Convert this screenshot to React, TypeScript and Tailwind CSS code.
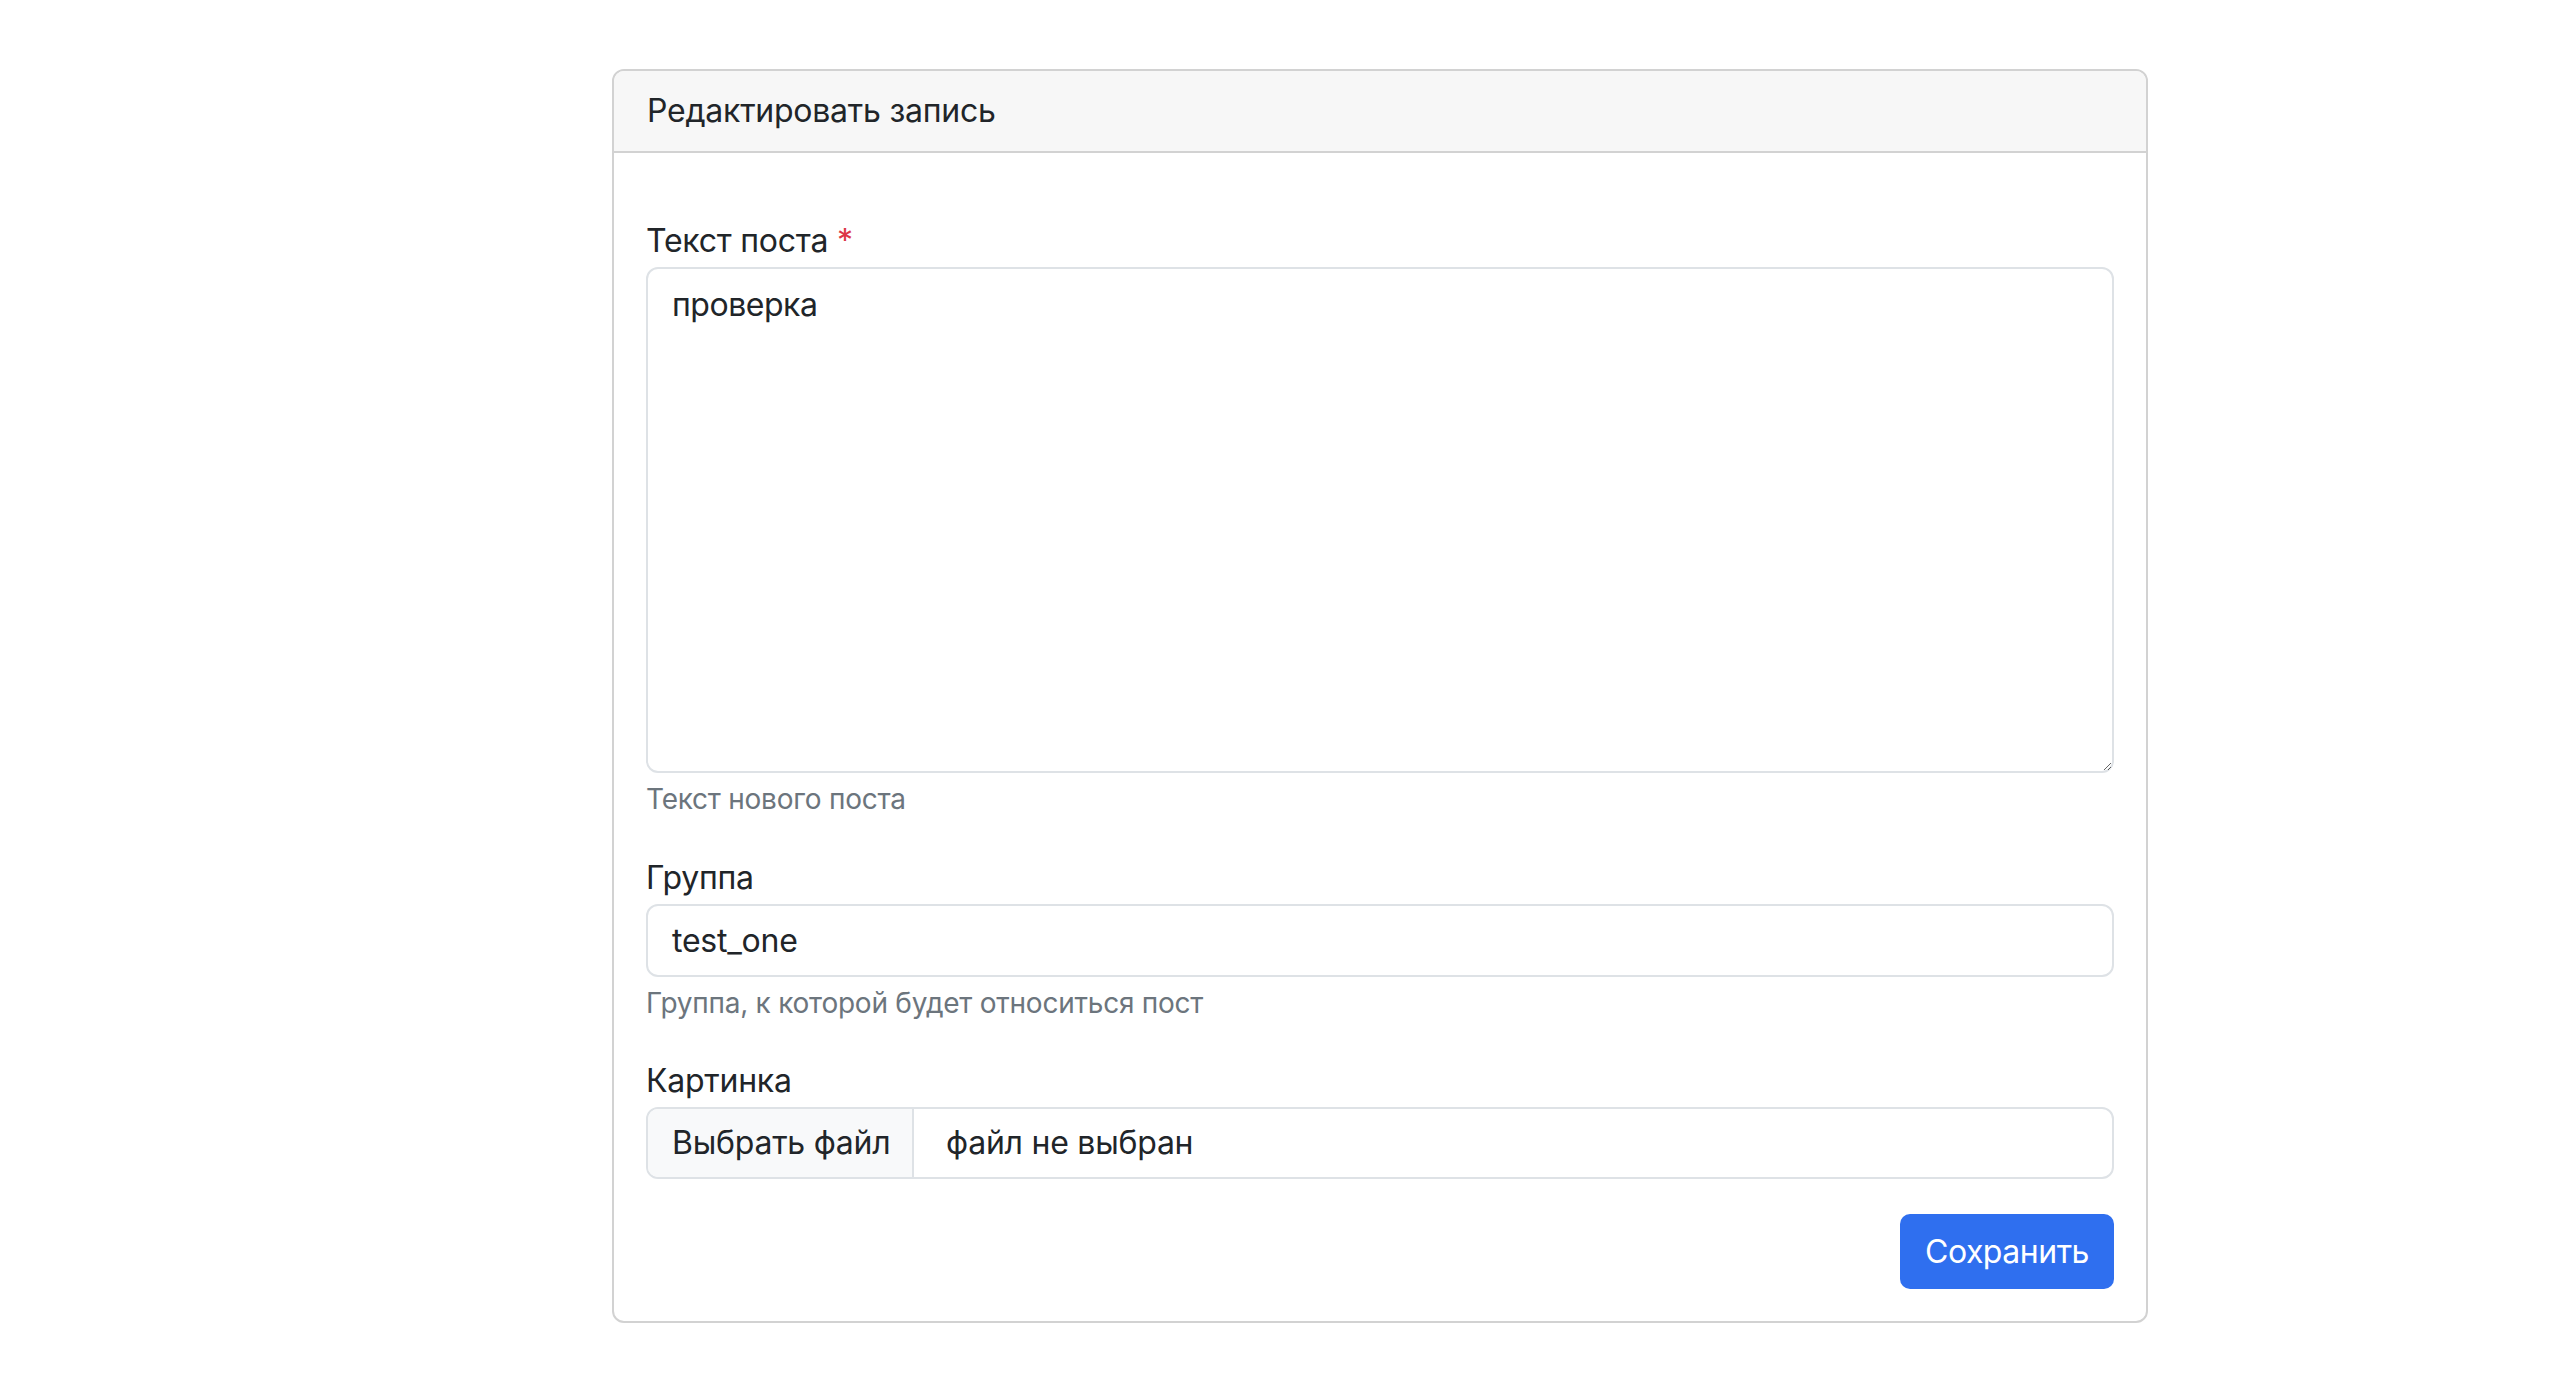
export default function App() {
  return (
    <div
      className="min-h-screen bg-white pt-[69px] tracking-[-0.015em] text-[#212529]"
      style={{ fontFamily: 'Inter, "Noto Sans", sans-serif' }}
    >
      <div className="ml-[612px] w-[1536px] rounded-[12px] border-2 border-[#d2d2d2] bg-white">
        <div className="flex h-[82px] items-center rounded-t-[10px] border-b-2 border-[#d2d2d2] bg-[#f7f7f7] px-[33px] text-[32px]">
          Редактировать запись
        </div>
        <form className="px-8 pb-8 pt-[64px]" onSubmit={(e) => e.preventDefault()}>
          <label className="mb-[2px] block h-[48px] text-[32px] leading-[48px]">
            Текст поста <span className="text-[#dc3545]">*</span>
          </label>
          <textarea
            readOnly
            defaultValue="проверка"
            className="block h-[506px] w-full rounded-[12px] border-2 border-[#dee2e6] px-[24px] py-[12px] text-[32px] leading-[48px] tracking-[-0.015em] outline-none"
          />
          <p className="mt-[5px] h-[42px] text-[28px] leading-[42px] text-[#6c757d]">Текст нового поста</p>

          <label className="mb-[2px] mt-[34px] block h-[48px] text-[32px] leading-[48px]">Группа</label>
          <div className="flex h-[73px] items-center rounded-[12px] border-2 border-[#dee2e6] px-[24px] text-[32px]">
            test_one
          </div>
          <p className="mt-[5px] h-[42px] text-[28px] leading-[42px] text-[#6c757d]">
            Группа, к которой будет относиться пост
          </p>

          <label className="mb-[2px] mt-[33px] block h-[48px] text-[32px] leading-[48px]">Картинка</label>
          <div className="flex h-[72px] overflow-hidden rounded-[12px] border-2 border-[#dee2e6] text-[32px]">
            <div className="flex w-[266px] items-center border-r-2 border-[#dee2e6] bg-[#f8f9fa] pl-[24px]">
              Выбрать файл
            </div>
            <div className="flex items-center pl-[32px]">файл не выбран</div>
          </div>

          <div className="mt-[35px] flex justify-end">
            <button
              type="submit"
              className="h-[75px] w-[214px] rounded-[10px] bg-[#2f6fef] text-[32px] tracking-[-0.015em] text-white"
            >
              Сохранить
            </button>
          </div>
        </form>
      </div>
    </div>
  )
}
